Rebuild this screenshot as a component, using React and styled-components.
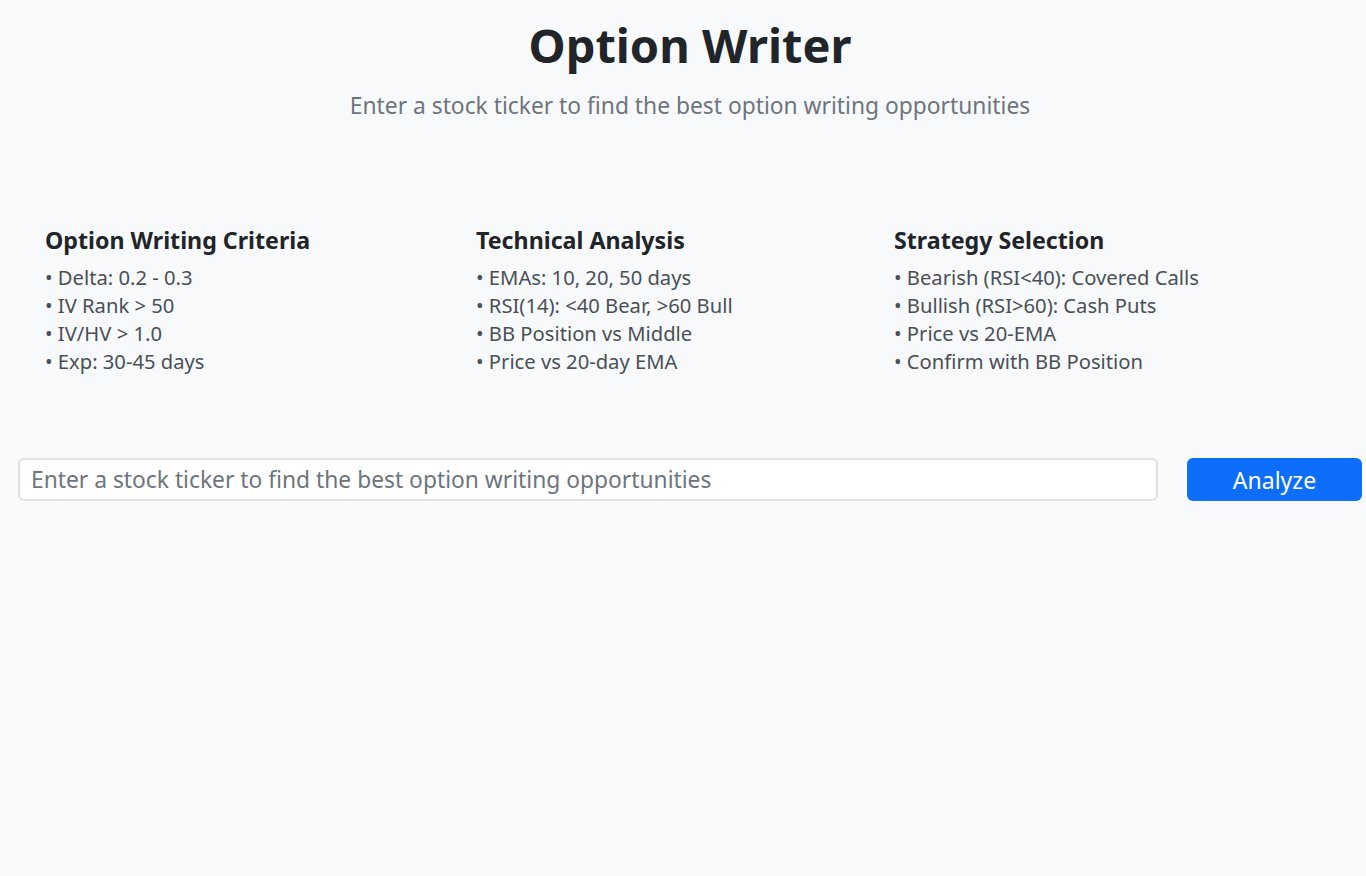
import React, { useState } from 'react';
import styled, { createGlobalStyle } from 'styled-components';

const GlobalStyle = createGlobalStyle`
  * {
    box-sizing: border-box;
  }

  body {
    margin: 0;
    background: #f8f9fa;
    font-family: "Noto Sans", "Open Sans", sans-serif;
    color: #212529;
  }
`;

const Page = styled.div`
  min-height: 100vh;
  padding: 12px 4px 0 18px;
`;

const Header = styled.header`
  text-align: center;
`;

const Title = styled.h1`
  margin: 0;
  font-size: 47px;
  font-weight: 700;
  line-height: 66px;
  color: #212529;
`;

const Subtitle = styled.p`
  margin: 13px 0 0;
  font-size: 22.8px;
  line-height: 30px;
  color: #6c757d;
`;

const Criteria = styled.section`
  display: flex;
  margin-top: 104px;
  padding-left: 27px;
`;

const Column = styled.div`
  width: ${props => props.width || 'auto'};
  flex: ${props => (props.width ? 'none' : '1')};
`;

const ColumnTitle = styled.h3`
  margin: 0 0 8px;
  font-size: 23.2px;
  font-weight: 700;
  line-height: 30px;
  color: #212529;
`;

const List = styled.ul`
  margin: 0;
  padding: 0;
  list-style: none;
`;

const Item = styled.li`
  font-size: 20.2px;
  line-height: 28px;
  color: #495057;

  &::before {
    content: '• ';
  }
`;

const SearchForm = styled.form`
  display: flex;
  align-items: center;
  gap: 29px;
  margin-top: 83px;
`;

const TickerInput = styled.input`
  flex: 1;
  height: 43px;
  padding: 0 11px;
  border: 2px solid #dee2e6;
  border-radius: 6px;
  background: #fff;
  font-family: inherit;
  font-size: 22.8px;
  color: #212529;
  outline: none;

  &::placeholder {
    color: #6c757d;
  }
`;

const AnalyzeButton = styled.button`
  width: 175px;
  height: 43px;
  border: none;
  border-radius: 6px;
  background: #0d6efd;
  color: #fff;
  font-family: inherit;
  font-size: 23px;
  cursor: pointer;

  &:hover {
    background: #0b5ed7;
  }
`;

const sections = [
  {
    title: 'Option Writing Criteria',
    width: '431px',
    items: ['Delta: 0.2 - 0.3', 'IV Rank > 50', 'IV/HV > 1.0', 'Exp: 30-45 days'],
  },
  {
    title: 'Technical Analysis',
    width: '418px',
    items: ['EMAs: 10, 20, 50 days', 'RSI(14): <40 Bear, >60 Bull', 'BB Position vs Middle', 'Price vs 20-day EMA'],
  },
  {
    title: 'Strategy Selection',
    items: ['Bearish (RSI<40): Covered Calls', 'Bullish (RSI>60): Cash Puts', 'Price vs 20-EMA', 'Confirm with BB Position'],
  },
];

function App() {
  const [ticker, setTicker] = useState('');

  const handleSubmit = e => {
    e.preventDefault();
  };

  return (
    <>
      <GlobalStyle />
      <Page>
        <Header>
          <Title>Option Writer</Title>
          <Subtitle>Enter a stock ticker to find the best option writing opportunities</Subtitle>
        </Header>

        <Criteria>
          {sections.map(section => (
            <Column key={section.title} width={section.width}>
              <ColumnTitle>{section.title}</ColumnTitle>
              <List>
                {section.items.map(item => (
                  <Item key={item}>{item}</Item>
                ))}
              </List>
            </Column>
          ))}
        </Criteria>

        <SearchForm onSubmit={handleSubmit}>
          <TickerInput
            value={ticker}
            onChange={e => setTicker(e.target.value.toUpperCase())}
            placeholder="Enter a stock ticker to find the best option writing opportunities"
          />
          <AnalyzeButton type="submit">Analyze</AnalyzeButton>
        </SearchForm>
      </Page>
    </>
  );
}

export default App;
